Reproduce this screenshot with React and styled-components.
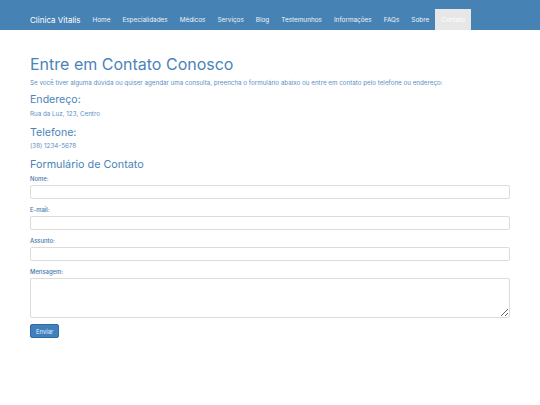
import React from "react";
import styled, { createGlobalStyle } from "styled-components";

const GlobalStyle = createGlobalStyle`
  html, body {
    margin: 0;
    padding: 0;
    background: #ffffff;
    font-family: Inter, "Noto Sans", sans-serif;
  }
  * {
    box-sizing: border-box;
  }
`;

const links = [
  "Home",
  "Especialidades",
  "Médicos",
  "Serviços",
  "Blog",
  "Testemunhos",
  "Informações",
  "FAQs",
  "Sobre",
  "Contato",
];

const Navbar = styled.nav`
  display: flex;
  align-items: flex-end;
  height: 30px;
  padding: 0 30px;
  background-color: #4682b4;
`;

const Brand = styled.a`
  display: flex;
  align-items: center;
  height: 21px;
  padding-right: 6px;
  font-size: 8px;
  color: #ffffff;
  text-decoration: none;
`;

const NavLink = styled.a`
  display: flex;
  align-items: center;
  height: 21px;
  padding: 0 6px;
  font-size: 6.4px;
  color: ${(p) => (p.$active ? "#ffffff" : "#eef3f8")};
  background-color: ${(p) => (p.$active ? "#e7e7e7" : "transparent")};
  text-decoration: none;
`;

const Container = styled.main`
  padding: 24px 30px 0;
  color: #4682b4;
`;

const Title = styled.h1`
  margin: 0;
  font-size: 16px;
  font-weight: 400;
  line-height: 20px;
  color: #4a84b8;
`;

const SubTitle = styled.h3`
  margin: ${(p) => p.$top || 8}px 0 0;
  font-size: ${(p) => p.$size || 10.6}px;
  font-weight: 400;
  line-height: 14px;
  color: #4a84b8;
`;

const Text = styled.p`
  margin: ${(p) => p.$top || 4}px 0 0;
  font-size: 6.25px;
  line-height: 9px;
  color: #5a8fc4;
`;

const Form = styled.form`
  display: flex;
  flex-direction: column;
  margin-top: 3px;
`;

const Field = styled.div`
  display: flex;
  flex-direction: column;
  margin-bottom: 7px;
`;

const Label = styled.label`
  font-size: 5.9px;
  font-weight: 500;
  line-height: 7px;
  color: #3f78ad;
  margin-bottom: 3px;
`;

const Input = styled.input`
  width: 100%;
  height: 14px;
  border: 1px solid #dcdcdc;
  border-radius: 2px;
  background: #ffffff;
  outline: none;
`;

const TextArea = styled.textarea`
  width: 100%;
  height: 40px;
  border: 1px solid #dcdcdc;
  border-radius: 2px;
  background: #ffffff;
  outline: none;
  resize: vertical;
`;

const Button = styled.button`
  align-self: flex-start;
  height: 14px;
  margin-top: -1px;
  padding: 0 5px;
  border: 1px solid #2e6da4;
  border-radius: 2px;
  background-color: #3f80bd;
  color: #e8f0f8;
  font-family: inherit;
  font-size: 5.9px;
`;

export default function App() {
  return (
    <>
      <GlobalStyle />
      <Navbar>
        <Brand href="#">Clinica Vitalis</Brand>
        {links.map((l) => (
          <NavLink key={l} href="#" $active={l === "Contato"}>
            {l}
          </NavLink>
        ))}
      </Navbar>
      <Container>
        <Title>Entre em Contato Conosco</Title>
        <Text $top={5}>
          Se você tiver alguma dúvida ou quiser agendar uma consulta, preencha o
          formulário abaixo ou entre em contato pelo telefone ou endereço:
        </Text>
        <SubTitle $top={5}>Endereço:</SubTitle>
        <Text $top={3}>Rua da Luz, 123, Centro</Text>
        <SubTitle $top={7}>Telefone:</SubTitle>
        <Text $top={2}>(38) 1234-5678</Text>
        <SubTitle $top={7} $size={10.8}>
          Formulário de Contato
        </SubTitle>
        <Form>
          <Field>
            <Label>Nome:</Label>
            <Input type="text" />
          </Field>
          <Field>
            <Label>E-mail:</Label>
            <Input type="email" />
          </Field>
          <Field>
            <Label>Assunto:</Label>
            <Input type="text" />
          </Field>
          <Field>
            <Label>Mensagem:</Label>
            <TextArea />
          </Field>
          <Button type="submit">Enviar</Button>
        </Form>
      </Container>
    </>
  );
}
